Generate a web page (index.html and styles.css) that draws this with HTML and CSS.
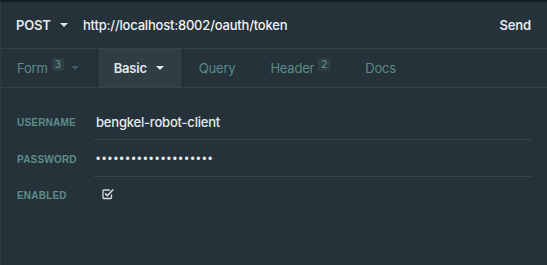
FILE: index.html
```html
<!DOCTYPE html>
<html>
<head>
    <title>Request - Basic Auth</title>
    <meta name="viewport" content="width=device-width, initial-scale=1">
    <link rel="stylesheet" href="styles.css">
</head>
<body>
    <div class="pane">
        <div class="urlbar">
            <div class="method">POST <span class="caret"></span></div>
            <div class="url">http://localhost:8002/oauth/token</div>
            <div class="send">Send</div>
        </div>

        <div class="tabs">
            <div class="tab">Form <span class="badge">3</span> <span class="caret dim"></span></div>
            <div class="tab active">Basic <span class="caret"></span></div>
            <div class="tab">Query</div>
            <div class="tab">Header <span class="badge">2</span></div>
            <div class="tab">Docs</div>
        </div>

        <div class="auth-form">
            <div class="row">
                <label class="label">Username</label>
                <div class="value">bengkel-robot-client</div>
            </div>
            <div class="row">
                <label class="label">Password</label>
                <div class="value dots">••••••••••••••••••••</div>
            </div>
            <div class="row last">
                <label class="label">Enabled</label>
                <div class="value">
                    <svg class="check" width="13" height="12" viewBox="0 0 13 12">
                        <path d="M9.5 6.5v3.2a0.8 0.8 0 0 1-0.8 0.8H1.8a0.8 0.8 0 0 1-0.8-0.8V2.8a0.8 0.8 0 0 1 0.8-0.8h6" fill="none" stroke="#d7dde0" stroke-width="1.3"/>
                        <path d="M3.2 5.4l2.2 2.3 5.8-6.2" fill="none" stroke="#d7dde0" stroke-width="1.6"/>
                    </svg>
                </div>
            </div>
        </div>
    </div>
</body>
</html>
```

FILE: styles.css
```css
body {
    margin: 0;
    background: #25323a;
    font-family: Inter, "Liberation Sans", Arial, sans-serif;
    color: #e3e8ea;
}
.pane {
    height: 263px;
    border-top: 2px solid #141c20;
    border-left: 1px solid #2c3c42;
    background: #25323a;
}
.urlbar {
    display: flex;
    align-items: center;
    height: 46px;
    border-bottom: 1px solid #33444a;
    padding: 0 16px 0 15px;
    font-size: 13px;
    font-weight: 600;
    letter-spacing: -0.2px;
}
.method {
    display: flex;
    align-items: center;
    width: 67px;
}
.caret {
    display: inline-block;
    width: 0;
    height: 0;
    border-left: 4px solid transparent;
    border-right: 4px solid transparent;
    border-top: 4px solid #e3e8ea;
    margin-left: 9px;
}
.caret.dim {
    border-top-color: #3f5a5e;
    margin-left: 7px;
}
.url {
    flex: 1;
    font-weight: 500;
    color: #eef1f2;
}
.tabs {
    display: flex;
    height: 38px;
    border-bottom: 1px solid #33444a;
}
.tab {
    display: flex;
    align-items: center;
    padding: 0 18px 0 16px;
    font-size: 13px;
    letter-spacing: -0.2px;
    color: #5b8b88;
    border-right: 1px solid transparent;
}
.tab:first-child {
    padding-right: 17px;
}
.tab.active {
    background: #2e3e44;
    color: #e3e8ea;
    font-weight: 600;
    border-left: 1px solid #1f2a30;
    border-right: 1px solid #1f2a30;
}
.badge {
    display: inline-block;
    background: #2e3f45;
    color: #6c9895;
    font-size: 10px;
    line-height: 13px;
    padding: 0 3px;
    border-radius: 2px;
    margin-left: 4px;
    position: relative;
    top: -4px;
}
.auth-form {
    padding: 15px 15px 0 16px;
}
.row {
    display: flex;
    align-items: stretch;
}
.label {
    width: 77px;
    display: flex;
    align-items: center;
    font-family: "Liberation Sans", Arial, sans-serif;
    font-size: 10px;
    font-weight: bold;
    text-transform: uppercase;
    color: #5d8c89;
    letter-spacing: 0.2px;
    padding-top: 1px;
}
.value {
    flex: 1;
    height: 35px;
    display: flex;
    align-items: center;
    padding: 1px 0 0 2px;
    border-bottom: 1px solid #34454b;
    font-size: 13px;
    font-weight: 500;
    letter-spacing: -0.2px;
    color: #e6eaec;
}
.row.last .value {
    border-bottom: none;
}
.dots {
    font-family: "Liberation Sans", Arial, sans-serif;
    letter-spacing: 1.7px;
    font-size: 12px;
}
.check {
    margin-left: 6px;
    margin-top: -4px;
}
```
